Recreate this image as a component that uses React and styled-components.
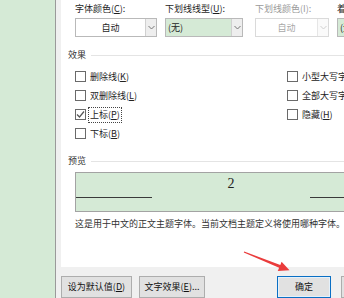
import React from "react";
import styled, { createGlobalStyle } from "styled-components";

const Global = createGlobalStyle`
  html, body { margin: 0; padding: 0; background: #f0f0f0; }
  body { font-family: "Noto Sans CJK SC", "Liberation Sans", sans-serif; }
  * { box-sizing: border-box; }
`;

const Page = styled.div`
  position: relative;
  width: 344px;
  height: 298px;
  overflow: hidden;
  display: flex;
  font-size: 9px;
  line-height: 12px;
  color: #1e1e1e;
`;

const LeftStrip = styled.div`
  flex: 0 0 56px;
  background: #d5ead6;
  border-right: 1px solid #9a9a9a;
`;

const Dialog = styled.div`
  flex: 0 0 345px;
  min-width: 0;
  background: #f0f0f0;
  padding-left: 5px;
  display: flex;
  flex-direction: column;
`;

const Content = styled.div`
  height: 267px;
  min-width: 0;
  background: #ffffff;
  padding: 3px 14px 0 7px;
  display: flex;
  flex-direction: column;
`;

const FieldsRow = styled.div`
  display: grid;
  grid-template-columns: 90px 90px 82px minmax(0, 1fr);
  padding-left: 7px;
`;

const Field = styled.div`
  display: flex;
  flex-direction: column;
  gap: 3px;
  min-width: 0;
`;

const Label = styled.div`
  white-space: nowrap;
  color: ${(p) => (p.$disabled ? "#9a9a9a" : "#1e1e1e")};
  u { text-decoration: underline; text-underline-offset: 1px; }
`;

const Select = styled.div`
  width: ${(p) => p.$w}px;
  flex: 0 0 auto;
  height: 19px;
  border: 1px solid ${(p) => (p.$disabled ? "#dadada" : "#b9b9b9")};
  background: ${(p) => (p.$green ? "#d5ead6" : "#ffffff")};
  display: flex;
  align-items: stretch;
`;

const SelectText = styled.div`
  flex: 1;
  display: flex;
  align-items: center;
  justify-content: ${(p) => (p.$left ? "flex-start" : "center")};
  padding-left: ${(p) => (p.$left ? "2px" : "0")};
  color: ${(p) => (p.$disabled ? "#a8a8a8" : "#1e1e1e")};
`;

const SelectArrow = styled.div`
  flex: 0 0 11px;
  border-left: 1px solid ${(p) => (p.$disabled ? "#e6e6e6" : "#d0d0d0")};
  background: ${(p) => (p.$disabled ? "#fafafa" : "#eeeeee")};
  display: flex;
  align-items: center;
  justify-content: center;
`;

const SectionHeader = styled.div`
  margin-top: ${(p) => p.$mt}px;
  display: flex;
  align-items: center;
  color: #333;
  &::after {
    content: "";
    flex: 1;
    height: 1px;
    background: #e4e4e4;
    margin-left: 5px;
  }
`;

const EffectsGrid = styled.div`
  margin-top: 6px;
  padding-left: 7px;
  display: grid;
  grid-template-columns: 212px minmax(0, 1fr);
`;

const Column = styled.div`
  display: flex;
  flex-direction: column;
  min-width: 0;
`;

const CheckRow = styled.div`
  height: 19px;
  display: flex;
  align-items: center;
  white-space: nowrap;
`;

const Box = styled.div`
  flex: 0 0 11px;
  width: 11px;
  height: 11px;
  border: 1px solid #6a6a6a;
  background: #fff;
  margin-right: 2px;
  display: flex;
  align-items: center;
  justify-content: center;
`;

const CheckText = styled.span`
  padding: 1px 1px;
  border: 1px ${(p) => (p.$focus ? "dotted #444" : "solid transparent")};
  color: #222;
  u { text-decoration: underline; text-underline-offset: 1px; }
`;

const Preview = styled.div`
  margin: 5px 0 0 7px;
  width: 312px;
  flex: 0 0 40px;
  height: 40px;
  border: 1px solid #a3a3a3;
  background: #d5ead6;
  display: flex;
  align-items: flex-start;
`;

const Baseline = styled.div`
  flex: 0 0 76px;
  height: 1px;
  margin-top: 24px;
  background: #3a3a3a;
`;

const PreviewText = styled.div`
  flex: 1;
  text-align: center;
  padding-top: 3px;
  font-family: "Liberation Serif", serif;
  font-size: 14px;
  line-height: 16px;
  color: #222;
`;

const Description = styled.div`
  margin: 6px 0 0 7px;
  white-space: nowrap;
  color: #333;
`;

const Footer = styled.div`
  display: flex;
  align-items: flex-start;
  padding: 9px 6px 0 0;
  gap: 7px;
`;

const Button = styled.div`
  width: ${(p) => p.$w}px;
  height: 22px;
  flex: 0 0 auto;
  display: flex;
  align-items: center;
  justify-content: center;
  background: #e1e1e1;
  border: 1px solid ${(p) => (p.$focus ? "#0a6fc4" : "#adadad")};
  box-shadow: ${(p) => (p.$focus ? "inset 0 0 0 1px #e5f1fb" : "none")};
  color: #111;
  white-space: nowrap;
  u { text-decoration: underline; text-underline-offset: 1px; }
`;

const RightButtons = styled.div`
  margin-left: auto;
  display: flex;
  gap: 10px;
`;

const ArrowSvg = styled.svg`
  position: absolute;
  left: 240px;
  top: 248px;
  width: 54px;
  height: 26px;
  pointer-events: none;
`;

const Chevron = ({ color }) => (
  <svg width="7" height="5" viewBox="0 0 7 5">
    <path d="M0.5 1 L3.5 4 L6.5 1" fill="none" stroke={color} strokeWidth="1" />
  </svg>
);

const Check = () => (
  <svg width="9" height="9" viewBox="0 0 9 9">
    <path d="M1 4.5 L3.5 7 L8 1.5" fill="none" stroke="#555" strokeWidth="1.2" />
  </svg>
);

const CheckItem = ({ children, checked, focus }) => (
  <CheckRow>
    <Box>{checked && <Check />}</Box>
    <CheckText $focus={focus}>{children}</CheckText>
  </CheckRow>
);

export default function App() {
  return (
    <>
      <Global />
      <Page>
        <LeftStrip />
        <Dialog>
          <Content>
            <FieldsRow>
              <Field>
                <Label>字体颜色(<u>C</u>):</Label>
                <Select $w={82}>
                  <SelectText>自动</SelectText>
                  <SelectArrow><Chevron color="#777" /></SelectArrow>
                </Select>
              </Field>
              <Field>
                <Label>下划线线型(<u>U</u>):</Label>
                <Select $w={78} $green>
                  <SelectText $left>(无)</SelectText>
                  <SelectArrow><Chevron color="#777" /></SelectArrow>
                </Select>
              </Field>
              <Field>
                <Label $disabled>下划线颜色(I):</Label>
                <Select $w={74} $disabled>
                  <SelectText $disabled>自动</SelectText>
                  <SelectArrow $disabled><Chevron color="#cfcfcf" /></SelectArrow>
                </Select>
              </Field>
              <Field>
                <Label>着重号(·):</Label>
                <Select $w={74} $green>
                  <SelectText $left>(无)</SelectText>
                  <SelectArrow><Chevron color="#777" /></SelectArrow>
                </Select>
              </Field>
            </FieldsRow>

            <SectionHeader $mt={12}>效果</SectionHeader>
            <EffectsGrid>
              <Column>
                <CheckItem>删除线(<u>K</u>)</CheckItem>
                <CheckItem>双删除线(<u>L</u>)</CheckItem>
                <CheckItem checked focus>上标(<u>P</u>)</CheckItem>
                <CheckItem>下标(<u>B</u>)</CheckItem>
              </Column>
              <Column>
                <CheckItem>小型大写字母(<u>M</u>)</CheckItem>
                <CheckItem>全部大写字母(<u>A</u>)</CheckItem>
                <CheckItem>隐藏(<u>H</u>)</CheckItem>
              </Column>
            </EffectsGrid>

            <SectionHeader $mt={12}>预览</SectionHeader>
            <Preview>
              <Baseline />
              <PreviewText>2</PreviewText>
              <Baseline />
            </Preview>
            <Description>这是用于中文的正文主题字体。当前文档主题定义将使用哪种字体。</Description>
          </Content>
          <Footer>
            <Button $w={71}>设为默认值(<u>D</u>)</Button>
            <Button $w={66}>文字效果(<u>E</u>)...</Button>
            <RightButtons>
              <Button $w={54} $focus>确定</Button>
              <Button $w={54}>取消</Button>
            </RightButtons>
          </Footer>
        </Dialog>
        <ArrowSvg viewBox="240 248 54 26">
          <polygon
            points="244.2,251.5 280.3,264.9 281.6,261.7 289.5,270.2 277.8,270.9 279.1,267.7 243.8,252.5"
            fill="#ea3c3c"
          />
        </ArrowSvg>
      </Page>
    </>
  );
}
